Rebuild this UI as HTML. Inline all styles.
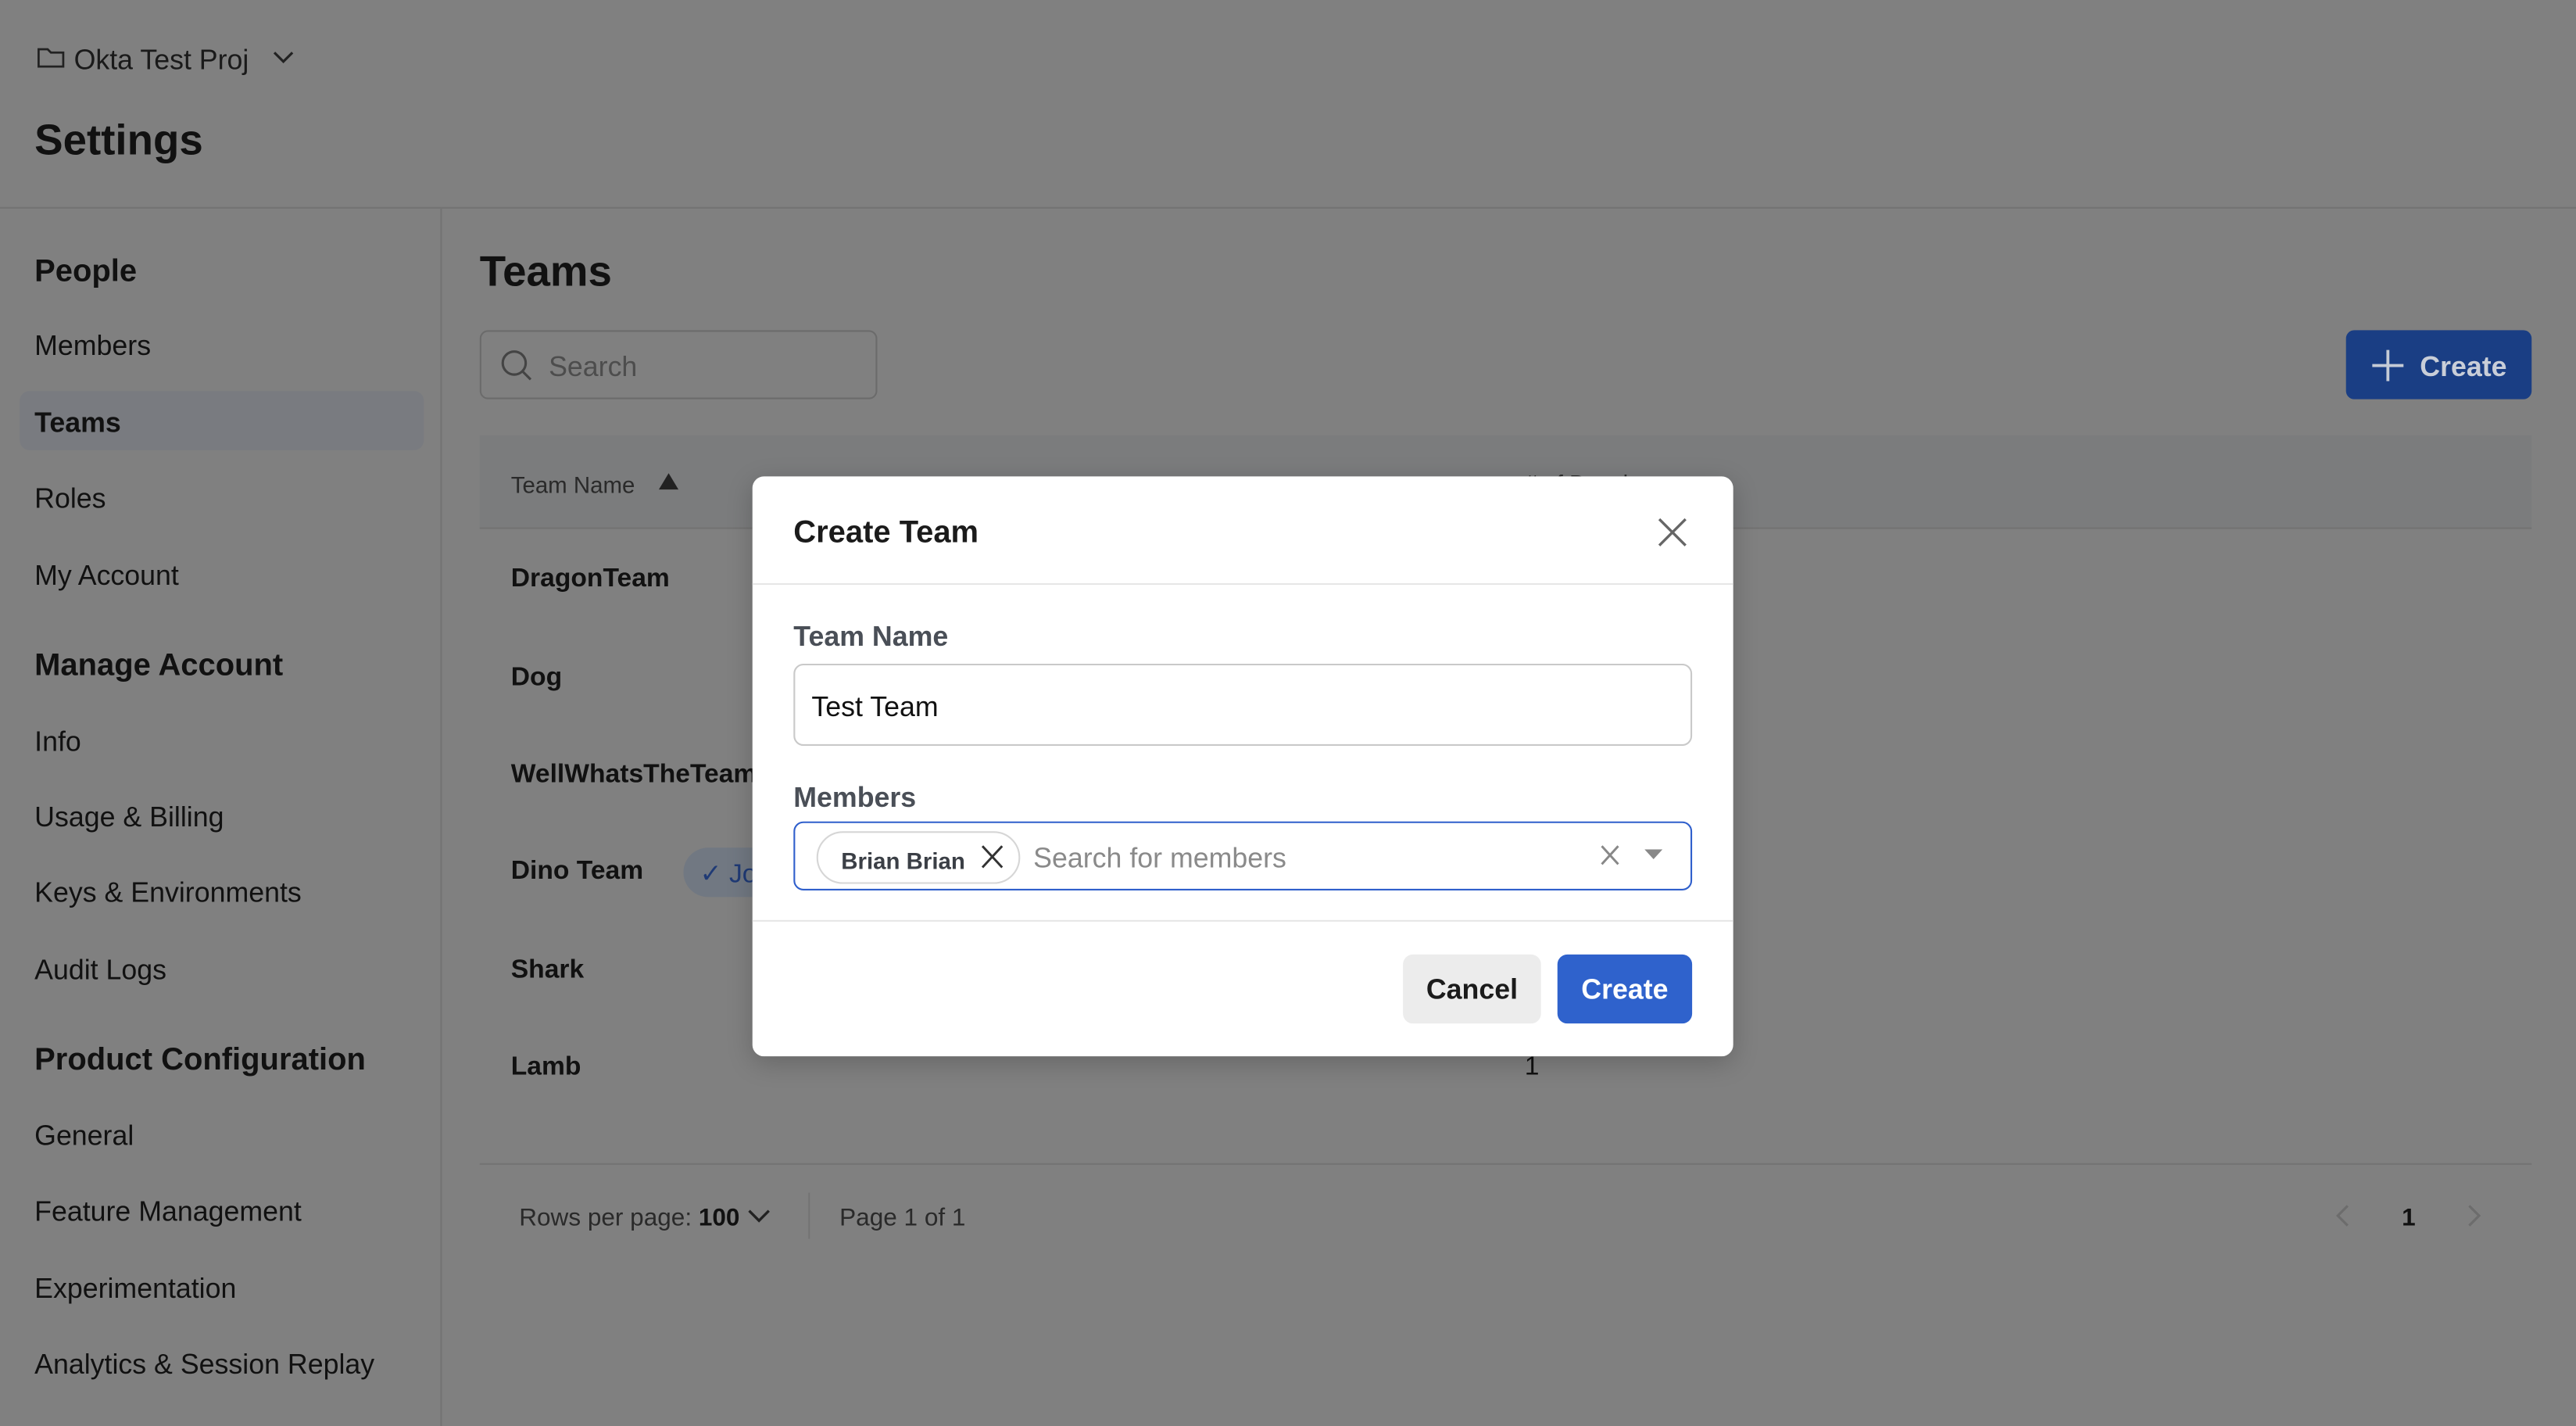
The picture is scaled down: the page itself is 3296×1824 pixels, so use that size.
<!DOCTYPE html>
<html><head><meta charset="utf-8"><style>
*{box-sizing:border-box;margin:0;padding:0}
html,body{width:3296px;height:1824px;overflow:hidden;background:#808080}
#w{width:1568px;height:868px;transform:scale(2.10204,2.10138);transform-origin:0 0;position:relative;font-family:"Liberation Sans",sans-serif;color:#111}
.a{position:absolute;white-space:nowrap}
.t{margin-top:1.5px}
.nav{font-size:17px;color:#111;margin-top:1.5px}
.sec{font-size:19px;font-weight:bold;margin-top:1.5px}
.row{font-size:16px;font-weight:bold;margin-top:2px}
</style></head><body><div id="w">
<svg class="a" style="left:22px;top:27px" width="18" height="17" viewBox="0 0 18 17"><path d="M1.5 3.5v10h15v-8.5h-7.5l-2-2h-5.5z" fill="none" stroke="#222" stroke-width="1.3"/></svg>
<div class="a t" style="left:45px;top:25px;font-size:17px;color:#1a1a1a">Okta Test Proj</div>
<svg class="a" style="left:165px;top:30px" width="15" height="10"><path d="M2 2l5.5 5.5L13 2" fill="none" stroke="#222" stroke-width="1.5"/></svg>
<div class="a t" style="left:21px;top:68px;font-size:26px;font-weight:bold">Settings</div>
<div class="a" style="left:0;top:126px;width:1568px;height:1px;background:#737373"></div>
<div class="a" style="left:268px;top:127px;width:1px;height:741px;background:#737373"></div>
<div class="a sec" style="left:21px;top:153px">People</div>
<div class="a nav" style="left:21px;top:199px">Members</div>
<div class="a" style="left:12px;top:238px;width:246px;height:36px;background:#797b80;border-radius:6px"></div>
<div class="a nav" style="left:21px;top:246px;font-weight:bold">Teams</div>
<div class="a nav" style="left:21px;top:292px">Roles</div>
<div class="a nav" style="left:21px;top:339px">My Account</div>
<div class="a sec" style="left:21px;top:393px">Manage Account</div>
<div class="a nav" style="left:21px;top:440px">Info</div>
<div class="a nav" style="left:21px;top:486px">Usage &amp; Billing</div>
<div class="a nav" style="left:21px;top:532px">Keys &amp; Environments</div>
<div class="a nav" style="left:21px;top:579px">Audit Logs</div>
<div class="a sec" style="left:21px;top:633px">Product Configuration</div>
<div class="a nav" style="left:21px;top:680px">General</div>
<div class="a nav" style="left:21px;top:726px">Feature Management</div>
<div class="a nav" style="left:21px;top:773px">Experimentation</div>
<div class="a nav" style="left:21px;top:819px">Analytics &amp; Session Replay</div>

<div class="a t" style="left:292px;top:148px;font-size:26px;font-weight:bold">Teams</div>
<div class="a" style="left:292px;top:201px;width:242px;height:42px;border:1px solid #6b6b6b;border-radius:5px"></div>
<svg class="a" style="left:304px;top:212px" width="22" height="22"><circle cx="9" cy="9" r="7" fill="none" stroke="#444" stroke-width="1.5"/><path d="M14 14l5 5" stroke="#444" stroke-width="1.5"/></svg>
<div class="a t" style="left:334px;top:212px;font-size:17px;color:#4d4d4d">Search</div>
<div class="a" style="left:1428px;top:201px;width:113px;height:42px;background:#1a3e84;border-radius:5px"></div>
<svg class="a" style="left:1443px;top:212px" width="21" height="21"><path d="M10.5 1v19M1 10.5h19" stroke="#c5cbd6" stroke-width="1.8"/></svg>
<div class="a t" style="left:1473px;top:212px;font-size:17px;color:#c9ced8;font-weight:bold">Create</div>
<div class="a" style="left:292px;top:265px;width:1249px;height:57px;background:#7b7c7d;border-bottom:1px solid #737373"></div>
<div class="a t" style="left:311px;top:285px;font-size:14px;color:#2a2a2a">Team Name</div>
<svg class="a" style="left:401px;top:288px" width="12" height="10"><path d="M6 0l6 10H0z" fill="#222"/></svg>
<div class="a t" style="left:928px;top:284px;font-size:14px;color:#2a2a2a"># of Developers</div>
<div class="a row" style="left:311px;top:342px">DragonTeam</div>
<div class="a row" style="left:311px;top:402px">Dog</div>
<div class="a row" style="left:311px;top:461px">WellWhatsTheTeam</div>
<div class="a row" style="left:311px;top:520px">Dino Team</div>
<div class="a" style="left:416px;top:516px;width:80px;height:30px;background:#717882;border-radius:15px"></div>
<div class="a t" style="left:426px;top:520px;font-size:16px;color:#1f3a75">✓ Joined</div>
<div class="a row" style="left:311px;top:580px">Shark</div>
<div class="a row" style="left:311px;top:639px">Lamb</div>
<div class="a t" style="left:928px;top:639px;font-size:16px">1</div>
<div class="a" style="left:292px;top:708px;width:1249px;height:1px;background:#737373"></div>
<div class="a t" style="left:316px;top:731px;font-size:15px;color:#2a2a2a">Rows per page: <b style="color:#111">100</b></div>
<svg class="a" style="left:455px;top:735px" width="14" height="10"><path d="M1 2l6 6 6-6" fill="none" stroke="#222" stroke-width="1.6"/></svg>
<div class="a" style="left:492px;top:726px;width:1px;height:28px;background:#737373"></div>
<div class="a t" style="left:511px;top:731px;font-size:15px;color:#2a2a2a">Page 1 of 1</div>
<svg class="a" style="left:1420px;top:732px" width="12" height="16"><path d="M9 2l-6 6 6 6" fill="none" stroke="#6c6c6c" stroke-width="1.5"/></svg>
<div class="a t" style="left:1462px;top:731px;font-size:15px;font-weight:bold">1</div>
<svg class="a" style="left:1500px;top:732px" width="12" height="16"><path d="M3 2l6 6-6 6" fill="none" stroke="#6c6c6c" stroke-width="1.5"/></svg>

<div class="a" style="left:458px;top:290px;width:597px;height:353px;background:#fff;border-radius:7px;box-shadow:0 4px 16px rgba(0,0,0,.2)">
 <div class="a t" style="left:25px;top:22px;font-size:19px;font-weight:bold;color:#1b1b1b">Create Team</div>
 <svg class="a" style="left:550px;top:24px" width="20" height="20"><path d="M2 2l16 16M18 2L2 18" stroke="#666" stroke-width="1.6"/></svg>
 <div class="a" style="left:0;top:65px;width:597px;height:1px;background:#e6e6e6"></div>
 <div class="a t" style="left:25px;top:86px;font-size:17px;font-weight:bold;color:#4a4f57">Team Name</div>
 <div class="a" style="left:25px;top:114px;width:547px;height:50px;border:1px solid #c9c9c9;border-radius:6px"></div>
 <div class="a t" style="left:36px;top:129px;font-size:17px;color:#111">Test Team</div>
 <div class="a t" style="left:25px;top:184px;font-size:17px;font-weight:bold;color:#4a4f57">Members</div>
 <div class="a" style="left:25px;top:210px;width:547px;height:42px;border:1px solid #2f5fcc;border-radius:6px"></div>
 <div class="a" style="left:39px;top:216px;width:124px;height:32px;border:1px solid #d6d6d6;border-radius:16px"></div>
 <div class="a t" style="left:54px;top:224px;font-size:14px;font-weight:bold;color:#3b3f46">Brian Brian</div>
 <svg class="a" style="left:139px;top:224px" width="14" height="15"><path d="M1 1l12 13M13 1L1 14" stroke="#333" stroke-width="1.4"/></svg>
 <div class="a t" style="left:171px;top:221px;font-size:17px;color:#8a8a8a">Search for members</div>
 <svg class="a" style="left:516px;top:224px" width="12" height="13"><path d="M1 1l10 11M11 1L1 12" stroke="#888" stroke-width="1.4"/></svg>
 <svg class="a" style="left:543px;top:227px" width="11" height="8"><path d="M0 0h11L5.5 6z" fill="#888"/></svg>
 <div class="a" style="left:0;top:270px;width:597px;height:1px;background:#e6e6e6"></div>
 <div class="a" style="left:396px;top:291px;width:84px;height:42px;background:#ececec;border-radius:6px;font-size:17px;font-weight:bold;color:#1b1b1b;text-align:center;line-height:44px">Cancel</div>
 <div class="a" style="left:490px;top:291px;width:82px;height:42px;background:#2f62cc;border-radius:6px;font-size:17px;font-weight:bold;color:#fff;text-align:center;line-height:44px">Create</div>
</div>
</div></body></html>
